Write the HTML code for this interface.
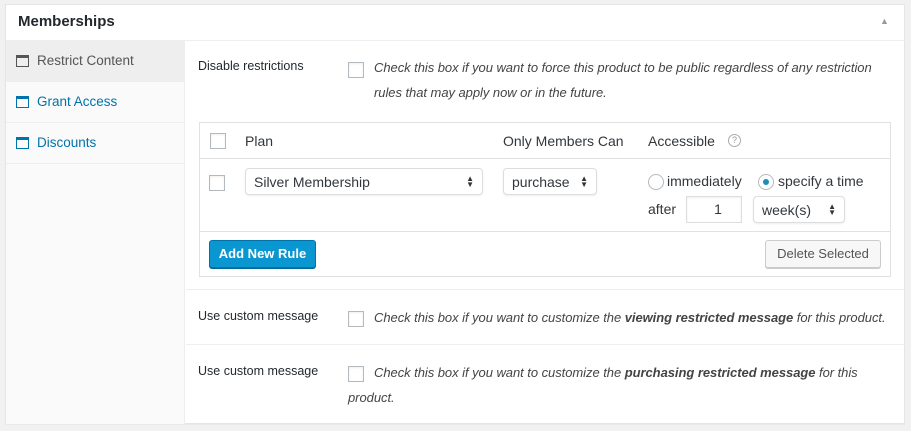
<!DOCTYPE html>
<html><head><meta charset="utf-8"><style>
*{box-sizing:border-box;margin:0;padding:0}
body{width:911px;height:431px;background:#f1f1f1;font-family:"Liberation Sans",sans-serif;color:#32373c;position:relative;overflow:hidden}
.a{position:absolute;white-space:nowrap}
.box{position:absolute;left:5px;top:4px;width:900px;height:420px;background:#fff;border:1px solid #e5e5e5;box-shadow:0 1px 1px rgba(0,0,0,.04)}
.cb{position:absolute;width:16px;height:16px;border:1px solid #b4b9be;background:#fff;box-shadow:inset 0 1px 2px rgba(0,0,0,.07)}
.it{font-style:italic;font-size:13px;color:#444;letter-spacing:-0.05px}
.lbl{font-size:12.5px;color:#23282d}
.sel{position:absolute;border:1px solid #ddd;border-radius:4px;background:#fff;font-size:14px;color:#32373c;padding:5px 8px;box-shadow:0 1px 2px rgba(0,0,0,.07);height:27px}
.arr{position:absolute;right:8px;top:7px;font-size:8px;line-height:6px;color:#333}
.nav{position:absolute;left:6px;width:179px;height:41px;border-bottom:1px solid #eee;font-size:13.5px;color:#0073aa}
.nav .ic{position:absolute;left:10px;top:14px;width:13px;height:12px;border:1.5px solid #0073aa;border-top-width:3px}
.nav span{position:absolute;left:31px;top:12px}
.rad{position:absolute;width:16px;height:16px;border-radius:50%;border:1px solid #b4b9be;background:#fff}
</style></head><body>
<div class="box"></div>
<div class="a" style="left:18px;top:13px;font-size:15px;font-weight:bold;color:#23282d">Memberships</div>
<div class="a" style="left:880px;top:16px;font-size:9px;color:#999">▲</div>
<div class="a" style="left:6px;top:40px;width:899px;height:1px;background:#eee"></div>
<div class="a" style="left:6px;top:41px;width:179px;height:383px;background:#fafafa;border-right:1px solid #eee"></div>
<div class="nav" style="top:41px;background:#eee;color:#555"><div class="ic" style="border-color:#555"></div><span>Restrict Content</span></div>
<div class="nav" style="top:82px"><div class="ic"></div><span>Grant Access</span></div>
<div class="nav" style="top:123px"><div class="ic"></div><span>Discounts</span></div>

<div class="a lbl" style="left:198px;top:59px">Disable restrictions</div>
<div class="cb" style="left:348px;top:62px"></div>
<div class="a it" style="left:374px;top:60px">Check this box if you want to force this product to be public regardless of any restriction</div>
<div class="a it" style="left:374px;top:85px">rules that may apply now or in the future.</div>

<div class="a" style="left:199px;top:122px;width:692px;height:155px;border:1px solid #e1e1e1"></div>
<div class="a" style="left:200px;top:158px;width:690px;height:1px;background:#e1e1e1"></div>
<div class="a" style="left:200px;top:231px;width:690px;height:1px;background:#e1e1e1"></div>
<div class="cb" style="left:210px;top:133px"></div>
<div class="a" style="left:245px;top:133px;font-size:14px">Plan</div>
<div class="a" style="left:503px;top:133px;font-size:14px">Only Members Can</div>
<div class="a" style="left:648px;top:133px;font-size:14px">Accessible</div>
<div class="a" style="left:728px;top:134px;width:13px;height:13px;border:1px solid #aaa;border-radius:50%;font-size:9px;color:#999;text-align:center;line-height:11px">?</div>
<div class="cb" style="left:209px;top:175px"></div>
<div class="sel" style="left:245px;top:168px;width:238px">Silver Membership<div class="arr">▲<br>▼</div></div>
<div class="sel" style="left:503px;top:168px;width:94px">purchase<div class="arr">▲<br>▼</div></div>
<div class="rad" style="left:648px;top:174px"></div>
<div class="a" style="left:667px;top:173px;font-size:14px">immediately</div>
<div class="rad" style="left:758px;top:174px"><div style="position:absolute;left:4px;top:4px;width:6px;height:6px;border-radius:50%;background:#1e8cbe"></div></div>
<div class="a" style="left:778px;top:173px;font-size:14px">specify a time</div>
<div class="a" style="left:648px;top:201px;font-size:14px">after</div>
<div class="a" style="left:686px;top:196px;width:56px;height:27px;border:1px solid #ddd;font-size:14px;text-align:center;line-height:25px;padding-left:8px;box-shadow:inset 0 1px 2px rgba(0,0,0,.07)">1</div>
<div class="sel" style="left:753px;top:196px;width:92px">week(s)<div class="arr">▲<br>▼</div></div>
<div class="a" style="left:209px;top:240px;width:107px;height:28px;background:#0a96d0;border:1px solid #0073aa;border-radius:3px;color:#fff;font-size:13px;font-weight:bold;text-align:center;line-height:26px;box-shadow:0 1px 0 #006799">Add New Rule</div>
<div class="a" style="left:765px;top:240px;width:116px;height:28px;background:#f7f7f7;border:1px solid #ccc;border-radius:3px;color:#555;font-size:13px;text-align:center;line-height:26px;box-shadow:0 1px 0 #ccc">Delete Selected</div>

<div class="a" style="left:186px;top:289px;width:719px;height:1px;background:#eee"></div>
<div class="a lbl" style="left:198px;top:309px">Use custom message</div>
<div class="cb" style="left:348px;top:311px"></div>
<div class="a it" style="left:374px;top:310px">Check this box if you want to customize the <b>viewing restricted message</b> for this product.</div>
<div class="a" style="left:186px;top:344px;width:719px;height:1px;background:#eee"></div>
<div class="a lbl" style="left:198px;top:364px">Use custom message</div>
<div class="cb" style="left:348px;top:366px"></div>
<div class="a it" style="left:374px;top:365px">Check this box if you want to customize the <b>purchasing restricted message</b> for this</div>
<div class="a it" style="left:348px;top:390px">product.</div>
</body></html>
